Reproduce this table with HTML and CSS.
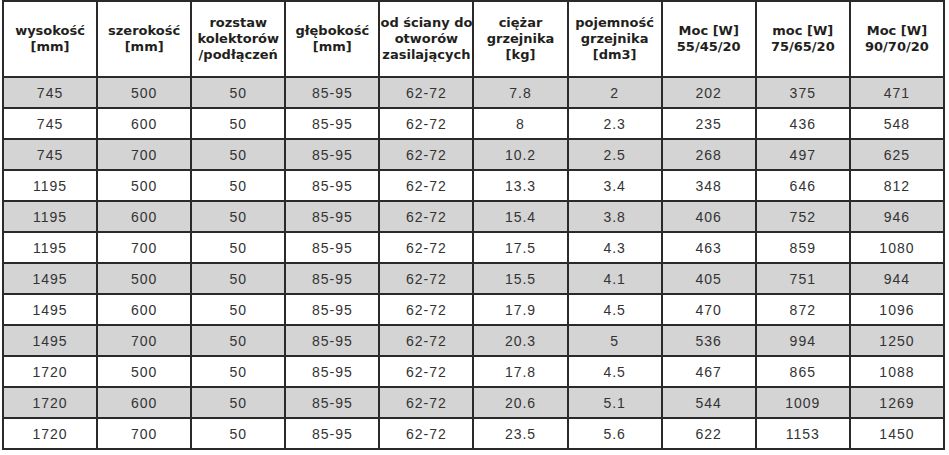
FILE: index.html
```html
<!DOCTYPE html>
<html lang="pl">
<head>
<meta charset="utf-8">
<title>Tabela grzejników</title>
<link rel="stylesheet" href="styles.css">
</head>
<body>
<table class="spec">
  <thead>
    <tr>
      <th>wysokość<br>[mm]</th>
      <th>szerokość<br>[mm]</th>
      <th>rozstaw<br>kolektorów<br>/podłączeń</th>
      <th>głębokość<br>[mm]</th>
      <th>od ściany do<br>otworów<br>zasilających</th>
      <th>ciężar<br>grzejnika<br>[kg]</th>
      <th>pojemność<br>grzejnika<br>[dm3]</th>
      <th>Moc [W]<br>55/45/20</th>
      <th>moc [W]<br>75/65/20</th>
      <th>Moc [W]<br>90/70/20</th>
    </tr>
  </thead>
  <tbody>
    <tr class="alt"><td>745</td><td>500</td><td>50</td><td>85-95</td><td>62-72</td><td>7.8</td><td>2</td><td>202</td><td>375</td><td>471</td></tr>
    <tr><td>745</td><td>600</td><td>50</td><td>85-95</td><td>62-72</td><td>8</td><td>2.3</td><td>235</td><td>436</td><td>548</td></tr>
    <tr class="alt"><td>745</td><td>700</td><td>50</td><td>85-95</td><td>62-72</td><td>10.2</td><td>2.5</td><td>268</td><td>497</td><td>625</td></tr>
    <tr><td>1195</td><td>500</td><td>50</td><td>85-95</td><td>62-72</td><td>13.3</td><td>3.4</td><td>348</td><td>646</td><td>812</td></tr>
    <tr class="alt"><td>1195</td><td>600</td><td>50</td><td>85-95</td><td>62-72</td><td>15.4</td><td>3.8</td><td>406</td><td>752</td><td>946</td></tr>
    <tr><td>1195</td><td>700</td><td>50</td><td>85-95</td><td>62-72</td><td>17.5</td><td>4.3</td><td>463</td><td>859</td><td>1080</td></tr>
    <tr class="alt"><td>1495</td><td>500</td><td>50</td><td>85-95</td><td>62-72</td><td>15.5</td><td>4.1</td><td>405</td><td>751</td><td>944</td></tr>
    <tr><td>1495</td><td>600</td><td>50</td><td>85-95</td><td>62-72</td><td>17.9</td><td>4.5</td><td>470</td><td>872</td><td>1096</td></tr>
    <tr class="alt"><td>1495</td><td>700</td><td>50</td><td>85-95</td><td>62-72</td><td>20.3</td><td>5</td><td>536</td><td>994</td><td>1250</td></tr>
    <tr><td>1720</td><td>500</td><td>50</td><td>85-95</td><td>62-72</td><td>17.8</td><td>4.5</td><td>467</td><td>865</td><td>1088</td></tr>
    <tr class="alt"><td>1720</td><td>600</td><td>50</td><td>85-95</td><td>62-72</td><td>20.6</td><td>5.1</td><td>544</td><td>1009</td><td>1269</td></tr>
    <tr><td>1720</td><td>700</td><td>50</td><td>85-95</td><td>62-72</td><td>23.5</td><td>5.6</td><td>622</td><td>1153</td><td>1450</td></tr>
  </tbody>
</table>
</body>
</html>
```

FILE: styles.css
```css
html, body {
  margin: 0;
  padding: 0;
  background: #ffffff;
}

.spec {
  margin: 0 0 0 2px;
  width: 943px;
  table-layout: fixed;
  border-collapse: collapse;
  color: #2b2b2b;
}

.spec th,
.spec td {
  border: 2px solid #2a2a2a;
  padding: 0;
  text-align: center;
  vertical-align: middle;
}

.spec th {
  height: 74px;
  font-family: "DejaVu Sans", sans-serif;
  font-weight: bold;
  font-size: 13px;
  line-height: 16px;
  color: #231f20;
}

.spec td {
  height: 29px;
  font-family: "Liberation Sans", Arial, sans-serif;
  font-size: 14px;
  letter-spacing: 1px;
  color: #333333;
}

.spec tr.alt td {
  background: #d4d4d4;
}
```
